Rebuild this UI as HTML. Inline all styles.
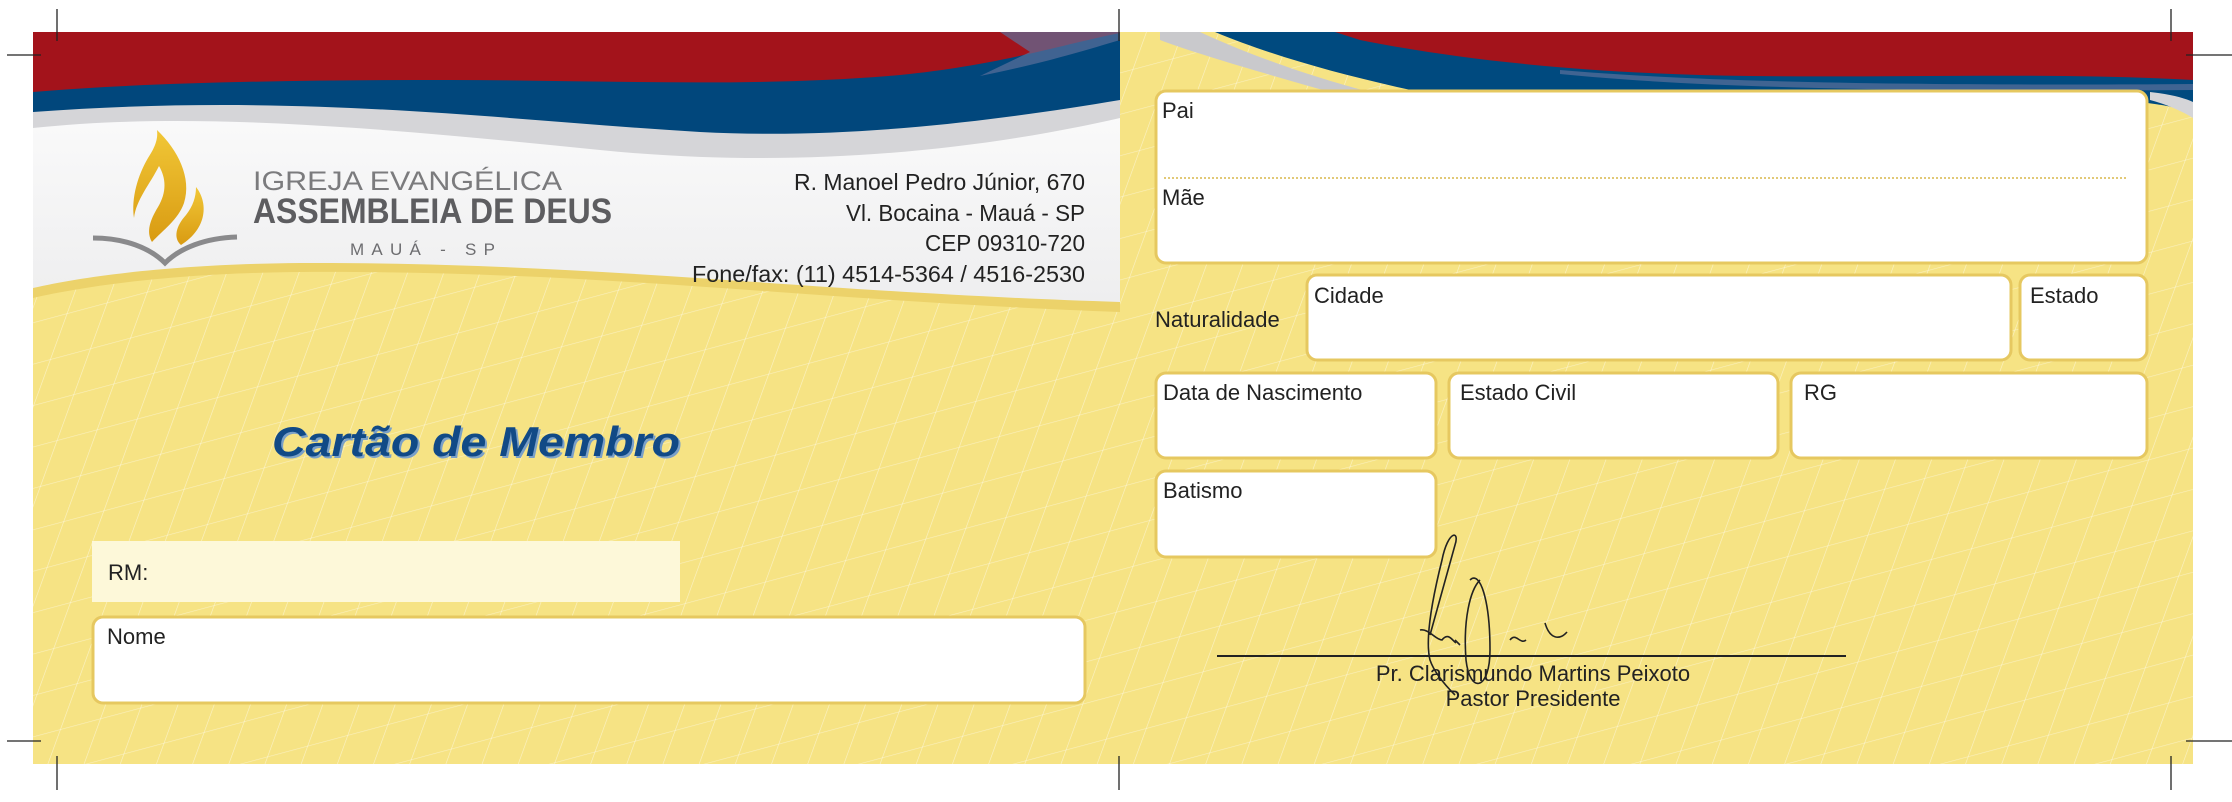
<!DOCTYPE html>
<html><head><meta charset="utf-8">
<style>
html,body{margin:0;padding:0;background:#fff;}
svg{display:block}
text{font-family:"Liberation Sans Narrow","Liberation Sans",sans-serif;}
</style></head>
<body>
<svg width="2232" height="802" viewBox="0 0 2232 802" xmlns="http://www.w3.org/2000/svg">
<defs>
<pattern id="pt" width="34" height="60" patternUnits="userSpaceOnUse" patternTransform="rotate(20)">
<line x1="0" y1="0" x2="0" y2="60" stroke="#fff" stroke-width="1.2" opacity="0.55"/>
</pattern>
<pattern id="pt2" width="60" height="40" patternUnits="userSpaceOnUse" patternTransform="rotate(-15)">
<line x1="0" y1="0" x2="60" y2="0" stroke="#fff" stroke-width="1.2" opacity="0.45"/>
</pattern>
<linearGradient id="wg" x1="0" y1="0" x2="0" y2="1">
<stop offset="0" stop-color="#ffffff"/><stop offset="1" stop-color="#eeeeef"/>
</linearGradient>
<linearGradient id="fl" x1="0" y1="0" x2="0" y2="1">
<stop offset="0" stop-color="#f1c737"/><stop offset="1" stop-color="#d99b12"/>
</linearGradient>
</defs>

<!-- LEFT CARD -->
<rect x="33" y="32" width="1087" height="732" fill="#f6e384"/>
<rect x="33" y="32" width="1087" height="732" fill="url(#pt)"/>
<rect x="33" y="32" width="1087" height="732" fill="url(#pt2)"/>
<path d="M33,32 H1120 V312 C800,300 600,270 300,272 C180,273 90,285 33,298 Z" fill="#ecd26a"/>
<path d="M33,32 H1120 V302 C800,292 600,262 300,263 C180,264 90,275 33,288 Z" fill="url(#wg)"/>
<path d="M33,32 H1120 V118 C980,150 800,170 600,150 C400,130 200,110 33,128 Z" fill="#d5d5d8"/>
<path d="M33,32 H1120 V100 C1000,120 850,140 700,132 C500,120 300,92 33,112 Z" fill="#01477c"/>
<path d="M33,32 H1120 V33 C1060,45 1000,65 900,75 C750,88 600,80 450,80 C300,80 150,82 33,92 Z" fill="#a3131b"/>
<path d="M1000,32 H1120 V40 C1080,52 1040,64 980,76 L1030,52 Z" fill="#5b6f9a" opacity="0.7"/>

<!-- logo -->
<path d="M157,130 C178,150 192,178 184,203 C178,220 163,230 152,242 C146,232 150,220 158,207 C167,192 166,178 159,166 C150,184 136,200 134,218 C131,198 138,175 148,158 C156,146 158,138 157,130Z" fill="url(#fl)"/>
<path d="M196,187 C208,202 208,228 181,245 C173,238 176,226 186,215 C193,206 196,197 196,187Z" fill="url(#fl)"/>
<path d="M93,238 C125,238 150,248 165,263 C180,248 205,238 237,237" fill="none" stroke="#8a8a8c" stroke-width="5"/>
<text x="253" y="190" font-size="27" fill="#7b7b7d" textLength="309" lengthAdjust="spacingAndGlyphs" font-family="Liberation Sans">IGREJA EVANGÉLICA</text>
<text x="253" y="223" font-size="35" font-weight="bold" fill="#5d5d60" textLength="359" lengthAdjust="spacingAndGlyphs" font-family="Liberation Sans">ASSEMBLEIA DE DEUS</text>
<text x="350" y="255" font-size="17" fill="#6d6d70" textLength="145" lengthAdjust="spacing" font-family="Liberation Sans">MAUÁ - SP</text>

<g font-size="23" fill="#222" text-anchor="end">
<text x="1085" y="190" textLength="291" lengthAdjust="spacingAndGlyphs">R. Manoel Pedro Júnior, 670</text>
<text x="1085" y="221" textLength="239" lengthAdjust="spacingAndGlyphs">Vl. Bocaina - Mauá - SP</text>
<text x="1085" y="251" textLength="160" lengthAdjust="spacingAndGlyphs">CEP 09310-720</text>
<text x="1085" y="282" textLength="393" lengthAdjust="spacingAndGlyphs">Fone/fax: (11) 4514-5364 / 4516-2530</text>
</g>

<text x="272" y="456" font-size="42" font-weight="bold" font-style="italic" fill="#7aa0c8" textLength="408" lengthAdjust="spacingAndGlyphs" font-family="Liberation Sans" transform="translate(2,2)">Cartão de Membro</text>
<text x="272" y="456" font-size="42" font-weight="bold" font-style="italic" fill="#114a86" textLength="408" lengthAdjust="spacingAndGlyphs" font-family="Liberation Sans">Cartão de Membro</text>

<rect x="92" y="541" width="588" height="61" fill="#fdf8d9"/>
<text x="108" y="580" font-size="22" fill="#222">RM:</text>
<rect x="93" y="617" width="992" height="86" rx="10" fill="#fff" stroke="#e6c860" stroke-width="3"/>
<text x="107" y="644" font-size="22" fill="#222">Nome</text>

<!-- RIGHT CARD -->
<rect x="1120" y="32" width="1073" height="732" fill="#f6e384"/>
<rect x="1120" y="32" width="1073" height="732" fill="url(#pt)"/>
<rect x="1120" y="32" width="1073" height="732" fill="url(#pt2)"/>
<path d="M1160,32 H1200 C1260,60 1330,82 1370,92 L1330,92 C1270,75 1200,55 1160,40 Z" fill="#c9c9cc"/>
<path d="M1215,32 H2193 V112 C2150,100 2100,96 1900,92 L1420,92 C1340,75 1270,55 1215,32 Z" fill="#004a7f"/>
<path d="M1560,70 C1700,82 1900,86 2193,84 V90 C1900,92 1700,88 1560,74Z" fill="#5b6f9a" opacity="0.7"/>
<path d="M1335,32 H2193 V80 C2050,72 1900,78 1750,76 C1600,74 1470,62 1360,40 Z" fill="#a3131b"/>
<path d="M2150,92 C2170,94 2185,98 2193,102 V118 C2180,110 2165,104 2150,100Z" fill="#d5d5d8"/>

<g fill="#fff" stroke="#e6c860" stroke-width="3">
<rect x="1156" y="91" width="991" height="172" rx="10"/>
<rect x="1307" y="275" width="704" height="85" rx="10"/>
<rect x="2020" y="275" width="127" height="85" rx="10"/>
<rect x="1156" y="373" width="280" height="85" rx="10"/>
<rect x="1449" y="373" width="329" height="85" rx="10"/>
<rect x="1791" y="373" width="356" height="85" rx="10"/>
<rect x="1156" y="471" width="280" height="86" rx="10"/>
</g>
<line x1="1164" y1="178" x2="2126" y2="178" stroke="#d9b74a" stroke-width="1.5" stroke-dasharray="2,2"/>
<g font-size="22" fill="#222">
<text x="1162" y="118">Pai</text>
<text x="1162" y="205">Mãe</text>
<text x="1155" y="327">Naturalidade</text>
<text x="1314" y="303">Cidade</text>
<text x="2030" y="303">Estado</text>
<text x="1163" y="400">Data de Nascimento</text>
<text x="1460" y="400">Estado Civil</text>
<text x="1804" y="400">RG</text>
<text x="1163" y="498">Batismo</text>
</g>

<g fill="none" stroke="#222" stroke-width="1.6">
<path d="M1430,635 C1440,600 1448,570 1455,545 C1460,530 1448,530 1442,560 C1432,600 1425,640 1430,660 C1435,675 1450,690 1455,695"/>
<path d="M1420,630 C1428,628 1436,640 1442,640 C1448,632 1452,640 1456,643"/>
<path d="M1470,580 C1480,570 1490,600 1490,650 C1490,690 1470,695 1466,660 C1463,620 1470,590 1480,580"/>
<path d="M1455,640 L1460,645"/>
<path d="M1510,640 C1516,632 1520,645 1526,640"/>
<path d="M1545,623 C1550,640 1560,640 1567,632"/>
</g>
<line x1="1217" y1="656" x2="1846" y2="656" stroke="#222" stroke-width="2"/>
<text x="1533" y="681" font-size="22" fill="#222" text-anchor="middle">Pr. Clarismundo Martins Peixoto</text>
<text x="1533" y="706" font-size="22" fill="#222" text-anchor="middle">Pastor Presidente</text>

<g stroke="#222" stroke-width="1.3">
<line x1="57" y1="9" x2="57" y2="41"/>
<line x1="7" y1="55" x2="41" y2="55"/>
<line x1="1119" y1="9" x2="1119" y2="41"/>
<line x1="2171" y1="9" x2="2171" y2="41"/>
<line x1="2186" y1="55" x2="2232" y2="55"/>
<line x1="57" y1="756" x2="57" y2="790"/>
<line x1="7" y1="741" x2="41" y2="741"/>
<line x1="1119" y1="756" x2="1119" y2="790"/>
<line x1="2171" y1="756" x2="2171" y2="790"/>
<line x1="2186" y1="741" x2="2232" y2="741"/>
</g>
</svg>
</body></html>
